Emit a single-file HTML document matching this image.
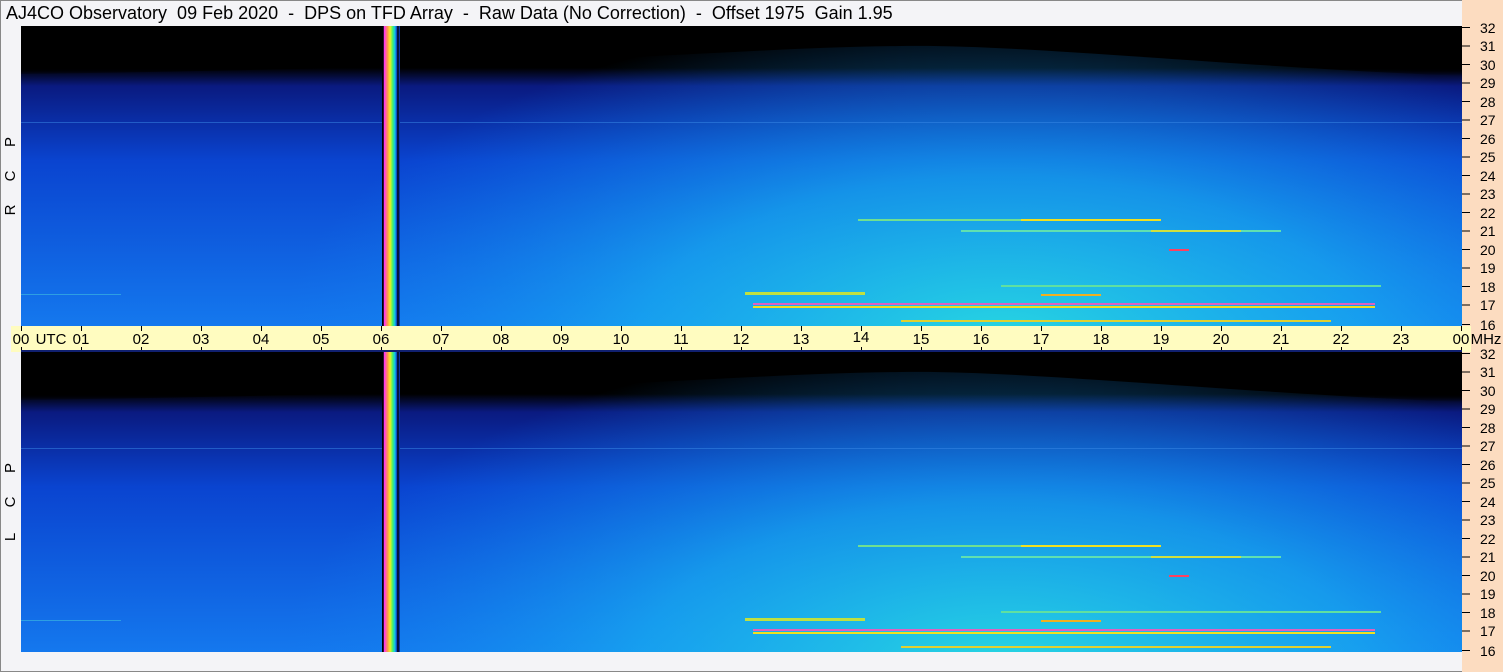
<!DOCTYPE html>
<html><head><meta charset="utf-8"><style>
body{margin:0;width:1503px;height:672px;background:#f4f4f7;position:relative;overflow:hidden;font-family:"Liberation Sans",sans-serif;color:#000}
.box{position:absolute;left:0;top:0;width:1501px;height:670px;border:1px solid #888}
.t{position:absolute;white-space:nowrap}
.title{left:6px;top:3px;font-size:18px}
.right{position:absolute;left:1462px;top:0;width:41px;height:672px;background:#fcdcc0}
.axis{position:absolute;left:11px;top:326px;width:1460px;height:26px;background:#fffcc0}
</style></head><body>
<div class="box"></div>
<div class="right"></div>
<div class="t title">AJ4CO Observatory&nbsp; 09 Feb 2020&nbsp; -&nbsp; DPS on TFD Array&nbsp; -&nbsp; Raw Data (No Correction)&nbsp; -&nbsp; Offset 1975&nbsp; Gain 1.95</div>
<div class="axis"></div>
<svg width="1503" height="672" style="position:absolute;left:0;top:0">
<defs>
<linearGradient id="v" x1="0" y1="0" x2="0" y2="1">
<stop offset="0" stop-color="#000"/><stop offset="0.14" stop-color="#000"/><stop offset="0.2" stop-color="#0a1a80"/><stop offset="0.45" stop-color="#0a44d0"/><stop offset="1" stop-color="#1478ee"/></linearGradient>
<radialGradient id="r" cx="0.68" cy="1.05" r="0.5" gradientTransform="translate(0.68 1.05) scale(1 2.2) translate(-0.68 -1.05)">
<stop offset="0" stop-color="#28dce0" stop-opacity="0.95"/><stop offset="0.5" stop-color="#18b0f0" stop-opacity="0.7"/><stop offset="1" stop-color="#1080f0" stop-opacity="0"/></radialGradient>
<linearGradient id="blk" x1="0" y1="0" x2="0" y2="1"><stop offset="0.85" stop-color="#000"/><stop offset="1" stop-color="#000" stop-opacity="0"/></linearGradient>
<linearGradient id="rb" x1="0" y1="0" x2="1" y2="0">
<stop offset="0" stop-color="#000"/><stop offset="0.08" stop-color="#000"/><stop offset="0.12" stop-color="#ff30ff"/><stop offset="0.3" stop-color="#ff9050"/><stop offset="0.45" stop-color="#f0f020"/><stop offset="0.6" stop-color="#40f070"/><stop offset="0.72" stop-color="#10c0f0"/><stop offset="0.82" stop-color="#1040c0"/><stop offset="0.88" stop-color="#000"/><stop offset="1" stop-color="#1040d0"/></linearGradient>
<symbol id="p" viewBox="0 0 1441 300" width="1441" height="300">
<rect width="1441" height="300" fill="url(#v)"/>
<rect width="1441" height="300" fill="url(#r)"/>
<path d="M0 0H1441V50C1200 40 1000 18 880 20C700 22 600 40 0 48Z" fill="url(#blk)"/>
<rect x="0" y="96" width="1441" height="1" fill="#3a8ae8" opacity="0.5"/>
<rect x="837" y="193" width="200" height="2" fill="#70e090"/>
<rect x="1000" y="193" width="140" height="2" fill="#f0e020"/>
<rect x="940" y="204" width="320" height="2" fill="#60e0b0"/>
<rect x="1130" y="204" width="90" height="2" fill="#d0e040"/>
<rect x="1148" y="223" width="20" height="2" fill="#ff4060"/>
<rect x="980" y="259" width="380" height="2" fill="#60e0a0"/>
<rect x="724" y="266" width="120" height="3" fill="#c0e040"/>
<rect x="732" y="277" width="622" height="2" fill="#e060c0"/>
<rect x="732" y="280" width="622" height="2" fill="#f0e020"/>
<rect x="880" y="294" width="430" height="2" fill="#e0d030"/>
<rect x="1020" y="268" width="60" height="2" fill="#f0b020"/>
<rect x="0" y="268" width="100" height="1" fill="#40c0e0" opacity="0.6"/>
<rect x="361" y="0" width="18" height="300" fill="url(#rb)"/>
</symbol>
</defs>
<use href="#p" x="21" y="26"/>
<use href="#p" x="21" y="352"/>
<g stroke="#000" stroke-width="1">
<path d="M1462 27.5h8M1462 46h8M1462 64.5h8M1462 83h8M1462 101.5h8M1462 120h8M1462 138.5h8M1462 157h8M1462 175.5h8M1462 194h8M1462 212.5h8M1462 231h8M1462 249.5h8M1462 268h8M1462 286.5h8M1462 305h8M1462 324.5h8"/>
<path d="M1462 353.5h8M1462 372h8M1462 390.5h8M1462 409h8M1462 427.5h8M1462 446h8M1462 464.5h8M1462 483h8M1462 501.5h8M1462 520h8M1462 538.5h8M1462 557h8M1462 575.5h8M1462 594h8M1462 612.5h8M1462 631h8M1462 650.5h8"/>
</g>
<g stroke="#000">
<path d="M21.5 326v5M21.5 347v5M81.5 326v5M81.5 347v5M141.5 326v5M141.5 347v5M201.5 326v5M201.5 347v5M261.5 326v5M261.5 347v5M321.5 326v5M321.5 347v5M381.5 326v5M381.5 347v5M441.5 326v5M441.5 347v5M501.5 326v5M501.5 347v5M561.5 326v5M561.5 347v5M621.5 326v5M621.5 347v5M681.5 326v5M681.5 347v5M741.5 326v5M741.5 347v5M801.5 326v5M801.5 347v5M861.5 326v5M861.5 347v5M921.5 326v5M921.5 347v5M981.5 326v5M981.5 347v5M1041.5 326v5M1041.5 347v5M1101.5 326v5M1101.5 347v5M1161.5 326v5M1161.5 347v5M1221.5 326v5M1221.5 347v5M1281.5 326v5M1281.5 347v5M1341.5 326v5M1341.5 347v5M1401.5 326v5M1401.5 347v5M1461.5 326v5M1461.5 347v5"/>
</g>
<rect x="21" y="350" width="1441" height="2" fill="#102070"/>
<g font-family="Liberation Sans, sans-serif" font-size="14" text-anchor="start">
<text x="1480" y="33">32</text><text x="1480" y="51">31</text><text x="1480" y="70">30</text><text x="1480" y="88">29</text><text x="1480" y="107">28</text><text x="1480" y="125">27</text><text x="1480" y="144">26</text><text x="1480" y="162">25</text><text x="1480" y="181">24</text><text x="1480" y="199">23</text><text x="1480" y="218">22</text><text x="1480" y="236">21</text><text x="1480" y="255">20</text><text x="1480" y="273">19</text><text x="1480" y="292">18</text><text x="1480" y="310">17</text><text x="1480" y="330">16</text>
<text x="1480" y="359">32</text><text x="1480" y="377">31</text><text x="1480" y="396">30</text><text x="1480" y="414">29</text><text x="1480" y="433">28</text><text x="1480" y="451">27</text><text x="1480" y="470">26</text><text x="1480" y="488">25</text><text x="1480" y="507">24</text><text x="1480" y="525">23</text><text x="1480" y="544">22</text><text x="1480" y="562">21</text><text x="1480" y="581">20</text><text x="1480" y="599">19</text><text x="1480" y="618">18</text><text x="1480" y="636">17</text><text x="1480" y="656">16</text>
</g>
<g font-family="Liberation Sans, sans-serif" font-size="15" text-anchor="middle">
<text x="21" y="344">00</text><text x="51" y="344">UTC</text><text x="81" y="344">01</text><text x="141" y="344">02</text><text x="201" y="344">03</text><text x="261" y="344">04</text><text x="321" y="344">05</text><text x="381" y="344">06</text><text x="441" y="344">07</text><text x="501" y="344">08</text><text x="561" y="344">09</text><text x="621" y="344">10</text><text x="681" y="344">11</text><text x="741" y="344">12</text><text x="801" y="344">13</text><text x="861" y="342">14</text><text x="921" y="344">15</text><text x="981" y="344">16</text><text x="1041" y="344">17</text><text x="1101" y="344">18</text><text x="1161" y="344">19</text><text x="1221" y="344">20</text><text x="1281" y="344">21</text><text x="1341" y="344">22</text><text x="1401" y="344">23</text><text x="1461" y="344">00</text><text x="1486" y="344">MHz</text>
</g>
<g font-family="Liberation Sans, sans-serif" font-size="15" text-anchor="middle">
<text transform="translate(15 142) rotate(-90)">P</text><text transform="translate(15 176) rotate(-90)">C</text><text transform="translate(15 210) rotate(-90)">R</text>
<text transform="translate(15 468) rotate(-90)">P</text><text transform="translate(15 502) rotate(-90)">C</text><text transform="translate(15 537) rotate(-90)">L</text>
</g>
</svg>
</body></html>
